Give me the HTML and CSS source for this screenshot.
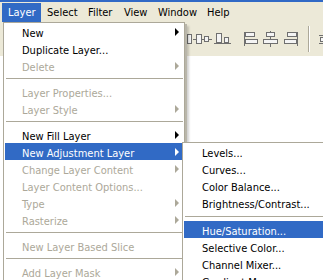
FILE: index.html
```html
<!DOCTYPE html>
<html>
<head>
<meta charset="utf-8">
<link rel="stylesheet" href="styles.css">
</head>
<body>
<div class="screen">
  <div class="titlebar"></div>
  <nav class="menubar">
    <span class="mb-item active">Layer</span>
    <span class="mb-item">Select</span>
    <span class="mb-item">Filter</span>
    <span class="mb-item">View</span>
    <span class="mb-item">Window</span>
    <span class="mb-item">Help</span>
  </nav>
  <div class="toolbar">
    <svg class="tb-icon" width="20" height="20" viewBox="0 0 20 20"><path d="M12 10.5H19" stroke="#6f6f6f"/><rect x="14.5" y="5.5" width="4" height="9" fill="#f4f4f4" stroke="#6f6f6f"/></svg>
    <svg class="tb-icon" width="20" height="20" viewBox="0 0 20 20"><path d="M0 10.5H19" stroke="#6f6f6f"/><rect x="3.5" y="5.5" width="5" height="9" fill="#f4f4f4" stroke="#6f6f6f"/><rect x="11.5" y="7.5" width="4" height="5" fill="#f4f4f4" stroke="#6f6f6f"/></svg>
    <svg class="tb-icon" width="20" height="20" viewBox="0 0 20 20"><path d="M1 14.5H18" stroke="#6f6f6f"/><rect x="3.5" y="4.5" width="5" height="9" fill="#f4f4f4" stroke="#6f6f6f"/><rect x="11.5" y="8.5" width="4" height="5" fill="#f4f4f4" stroke="#6f6f6f"/></svg>
    <span class="tb-gap"></span>
    <svg class="tb-icon" width="20" height="20" viewBox="0 0 20 20"><path d="M3.5 3V17" stroke="#6f6f6f"/><rect x="4.5" y="3.5" width="9" height="4" fill="#f4f4f4" stroke="#6f6f6f"/><rect x="4.5" y="10.5" width="12" height="4" fill="#f4f4f4" stroke="#6f6f6f"/></svg>
    <svg class="tb-icon" width="20" height="20" viewBox="0 0 20 20"><path d="M9.5 2V18" stroke="#6f6f6f"/><rect x="5.5" y="3.5" width="8" height="4" fill="#f4f4f4" stroke="#6f6f6f"/><rect x="2.5" y="10.5" width="14" height="4" fill="#f4f4f4" stroke="#6f6f6f"/></svg>
    <svg class="tb-icon" width="20" height="20" viewBox="0 0 20 20"><path d="M16.5 3V17" stroke="#6f6f6f"/><rect x="6.5" y="3.5" width="9" height="4" fill="#f4f4f4" stroke="#6f6f6f"/><rect x="3.5" y="10.5" width="12" height="4" fill="#f4f4f4" stroke="#6f6f6f"/></svg>
    <span class="tb-sep"></span>
    <svg class="tb-icon" width="20" height="20" viewBox="0 0 20 20"><path d="M2 6.5H9M2 14.5H9" stroke="#6f6f6f"/><rect x="3.5" y="8.5" width="4" height="4" fill="#f4f4f4" stroke="#6f6f6f"/></svg>
  </div>
  <div class="workspace"></div>

  <ul class="menu menu-main">
    <li class="item"><span>New</span><i class="arrow"></i></li>
    <li class="item"><span>Duplicate Layer...</span></li>
    <li class="item disabled"><span>Delete</span><i class="arrow"></i></li>
    <li class="sep"></li>
    <li class="item disabled"><span>Layer Properties...</span></li>
    <li class="item disabled"><span>Layer Style</span><i class="arrow"></i></li>
    <li class="sep"></li>
    <li class="item"><span>New Fill Layer</span><i class="arrow"></i></li>
    <li class="item selected"><span>New Adjustment Layer</span><i class="arrow"></i></li>
    <li class="item disabled"><span>Change Layer Content</span><i class="arrow"></i></li>
    <li class="item disabled"><span>Layer Content Options...</span></li>
    <li class="item disabled"><span>Type</span><i class="arrow"></i></li>
    <li class="item disabled"><span>Rasterize</span><i class="arrow"></i></li>
    <li class="sep"></li>
    <li class="item disabled"><span>New Layer Based Slice</span></li>
    <li class="sep"></li>
    <li class="item disabled"><span>Add Layer Mask</span><i class="arrow"></i></li>
  </ul>

  <ul class="menu menu-sub">
    <li class="item"><span>Levels...</span></li>
    <li class="item"><span>Curves...</span></li>
    <li class="item"><span>Color Balance...</span></li>
    <li class="item"><span>Brightness/Contrast...</span></li>
    <li class="sep sep-sub"></li>
    <li class="item selected"><span>Hue/Saturation...</span></li>
    <li class="item"><span>Selective Color...</span></li>
    <li class="item"><span>Channel Mixer...</span></li>
    <li class="item"><span>Gradient Map...</span></li>
  </ul>
</div>
</body>
</html>
```
FILE: styles.css
```css
* { box-sizing: border-box; }
html, body { margin: 0; padding: 0; }
body {
  width: 323px;
  height: 280px;
  overflow: hidden;
  font-family: "DejaVu Sans Condensed", "DejaVu Sans", sans-serif;
  font-stretch: condensed;
  font-size: 11px;
  color: #000;
  background: #fff;
}
.screen {
  position: relative;
  width: 323px;
  height: 280px;
  overflow: hidden;
  display: flex;
  flex-direction: column;
}
.titlebar {
  height: 2px;
  background: #3169c6;
}
.menubar {
  height: 20px;
  background: #ece9d8;
  display: flex;
  padding-left: 2px;
  padding-top: 1px;
}
.mb-item {
  height: 19px;
  line-height: 19px;
  padding-left: 6px;
  white-space: nowrap;
}
.mb-item:nth-child(1) { width: 39px; }
.mb-item:nth-child(2) { width: 41px; }
.mb-item:nth-child(3) { width: 36px; }
.mb-item:nth-child(4) { width: 34px; }
.mb-item:nth-child(5) { width: 49px; }
.mb-item:nth-child(6) { width: 40px; }
.mb-item.active {
  background: #316ac5;
  color: #fff;
}
.toolbar {
  height: 34px;
  background: #ece9d8;
  display: flex;
  align-items: flex-start;
  padding-left: 173px;
  padding-top: 7px;
}
.tb-icon { display: block; flex: none; }
.tb-gap { width: 8px; flex: none; }
.tb-sep {
  flex: none;
  width: 2px;
  height: 26px;
  margin: -3px 7px 0 7px;
  border-left: 1px solid #aca899;
  border-right: 1px solid #fff;
}
.workspace {
  flex: 1;
  background: #fff;
}
.menu {
  list-style: none;
  margin: 0;
  position: absolute;
  background: #fff;
  border: 1px solid #aca899;
  box-shadow: 2px 2px 0 #b9b6aa, 4px 4px 2px rgba(0, 0, 0, 0.18);
}
.menu-main {
  left: 3px;
  top: 22px;
  width: 182px;
  padding: 0 1px;
}
.menu-sub {
  left: 182px;
  top: 142px;
  width: 160px;
  padding: 0 1px;
}
.item {
  height: 17px;
  display: flex;
  align-items: flex-start;
  justify-content: space-between;
  padding-left: 17px;
  padding-right: 4px;
  padding-top: 4px;
  line-height: 13px;
  white-space: nowrap;
}
.disabled { color: #aca899; }
.selected { background: #316ac5; color: #fff; }
.arrow {
  width: 0;
  height: 0;
  margin-top: 1px;
  border-left: 4px solid #000;
  border-top: 4px solid transparent;
  border-bottom: 4px solid transparent;
}
.disabled .arrow { border-left-color: #aca899; }
.selected .arrow { border-left-color: #fff; }
.sep {
  height: 9px;
  padding: 4px 0 4px 1px;
}
.sep::before {
  content: "";
  display: block;
  height: 1px;
  background: #aca899;
}
.sep-sub {
  height: 10px;
  padding-top: 5px;
}
.menu-sub .item { padding-left: 18px; }
```
